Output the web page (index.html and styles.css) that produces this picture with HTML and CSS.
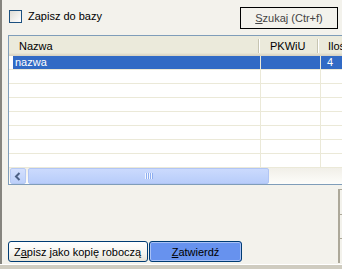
FILE: index.html
```html
<!DOCTYPE html>
<html lang="pl">
<head>
    <meta charset="UTF-8">
    <meta name="viewport" content="width=device-width, initial-scale=1.0">
    <title>Dokument</title>
    <link rel="stylesheet" href="styles.css">
</head>
<body>
<div class="window">
    <div class="main">
        <div class="toolbar">
            <label class="check-label"><span class="check"></span>Zapisz do bazy</label>
            <button class="search-btn"><u>S</u>zukaj (Ctr+f)</button>
        </div>

        <div class="grid">
            <div class="grid-head">
                <span class="h-cell h-name">Nazwa</span>
                <span class="sep"></span>
                <span class="h-cell h-pkwiu">PKWiU</span>
                <span class="sep"></span>
                <span class="h-cell h-qty">Ilość</span>
            </div>
            <div class="grid-body">
                <div class="row selected"><span class="cell c-name">nazwa</span><span class="cell c-pkwiu"></span><span class="cell c-qty">4</span></div>
                <div class="row"><span class="cell c-name"></span><span class="cell c-pkwiu"></span><span class="cell c-qty"></span></div>
                <div class="row"><span class="cell c-name"></span><span class="cell c-pkwiu"></span><span class="cell c-qty"></span></div>
                <div class="row"><span class="cell c-name"></span><span class="cell c-pkwiu"></span><span class="cell c-qty"></span></div>
                <div class="row"><span class="cell c-name"></span><span class="cell c-pkwiu"></span><span class="cell c-qty"></span></div>
                <div class="row"><span class="cell c-name"></span><span class="cell c-pkwiu"></span><span class="cell c-qty"></span></div>
                <div class="row"><span class="cell c-name"></span><span class="cell c-pkwiu"></span><span class="cell c-qty"></span></div>
                <div class="row"><span class="cell c-name"></span><span class="cell c-pkwiu"></span><span class="cell c-qty"></span></div>
            </div>
            <div class="hscroll">
                <span class="arrow-btn">
                    <svg width="8" height="9" viewBox="0 0 8 9"><polyline points="5.5,1 2,4.5 5.5,8" fill="none" stroke="#4d6185" stroke-width="2"/></svg>
                </span>
                <span class="thumb"><span class="grip"></span></span>
            </div>
        </div>

        <div class="lower">
            <div class="actions">
                <button class="btn btn-draft">Z<u>a</u>pisz jako kopię roboczą</button>
                <button class="btn btn-ok"><u>Z</u>atwierdź</button>
            </div>
            <div class="side">
                <span class="side-box"></span>
                <span class="side-box"></span>
                <span class="side-box"></span>
            </div>
        </div>
    </div>
    <div class="status"></div>
</div>
</body>
</html>
```

FILE: styles.css
```css
* {
    box-sizing: border-box;
}
body {
    margin: 0;
    background: #f3f2ec;
    font-family: "Liberation Sans", Arial, sans-serif;
    font-size: 11px;
    color: #000;
}
.window {
    width: 342px;
    height: 269px;
    overflow: hidden;
    display: flex;
    flex-direction: column;
}
.main {
    height: 264px;
    border-left: 2px solid #86857f;
    display: flex;
    flex-direction: column;
}
.status {
    flex: 1;
    border-top: 1px solid #fff;
    background: #cfccc0;
}

/* top bar */
.toolbar {
    height: 35px;
    display: flex;
    justify-content: space-between;
    align-items: flex-start;
    padding: 7px 4px 0 7px;
}
.check-label {
    display: flex;
    align-items: center;
    gap: 6px;
    margin-top: 3px;
    line-height: 13px;
}
.check {
    width: 13px;
    height: 13px;
    border: 1px solid #1c5180;
    background: linear-gradient(135deg, #dedcd5, #fff);
}
.search-btn {
    width: 98px;
    height: 22px;
    border: 1px solid #000;
    background: transparent;
    font: inherit;
    color: #444;
    padding: 0;
}

/* list */
.grid {
    margin-left: 6px;
    height: 150px;
    border: 1px solid #7f9db9;
    border-right: none;
    background: #fff;
    display: flex;
    flex-direction: column;
    overflow: hidden;
}
.grid-head {
    height: 20px;
    flex: none;
    display: flex;
    align-items: center;
    background: linear-gradient(#ebeadb, #ebeadb 85%, #e2decd 90%, #d6d2c2 100%);
    white-space: nowrap;
}
.h-cell {
    flex: none;
    line-height: 13px;
}
.h-name {
    width: 249px;
    padding-left: 10px;
}
.h-pkwiu {
    width: 57px;
    padding-left: 10px;
}
.h-qty {
    padding-left: 9px;
}
.sep {
    flex: none;
    width: 2px;
    height: 14px;
    border-left: 1px solid #c7c5b2;
    border-right: 1px solid #fff;
}
.grid-body {
    height: 112px;
    flex: none;
    overflow: hidden;
}
.row {
    height: 14px;
    display: flex;
    border-bottom: 1px solid #ebe9d8;
}
.row.selected {
    background: linear-gradient(to right, #fff 4px, #316ac5 4px);
    color: #fff;
}
.cell {
    flex: none;
    line-height: 13px;
    padding-left: 6px;
    white-space: nowrap;
}
.c-name {
    width: 252px;
    border-right: 1px solid #ebe9d8;
}
.c-pkwiu {
    width: 60px;
    border-right: 1px solid #ebe9d8;
}
.c-qty {
    flex: 1;
}

/* horizontal scrollbar */
.hscroll {
    height: 16px;
    flex: none;
    display: flex;
    align-items: stretch;
    padding-left: 1px;
    background: linear-gradient(#f1efe8, #fdfdfa);
}
.arrow-btn {
    width: 16px;
    display: flex;
    align-items: center;
    justify-content: center;
    border: 1px solid #b6c9f3;
    border-radius: 2px;
    background: linear-gradient(#d4e0fd, #bcd0fa);
}
.thumb {
    width: 241px;
    margin-left: 2px;
    display: flex;
    align-items: center;
    justify-content: center;
    border: 1px solid #b1c5f4;
    border-radius: 2px;
    background: linear-gradient(#cbdafd, #b8cdfa);
}
.grip {
    width: 8px;
    height: 6px;
    background: repeating-linear-gradient(to right, #f1f5fe 0 1px, #8eaef0 1px 2px);
}

/* lower part */
.lower {
    flex: 1;
    display: flex;
}
.actions {
    flex: 1;
    display: flex;
    align-items: flex-end;
    gap: 1px;
    padding: 0 0 2px 6px;
}
.btn {
    height: 21px;
    border: 1px solid #003c74;
    border-radius: 3px;
    font: inherit;
    color: #000;
    padding: 0 4px;
    white-space: nowrap;
}
.btn-draft {
    width: 140px;
    text-align: left;
    padding-left: 5px;
    background: linear-gradient(#fff, #f4f3ee 60%, #e4e1d5);
}
.btn-ok {
    width: 93px;
    background: #6792ee;
    box-shadow: inset 0 0 0 1px #a9c1f5;
}
.side {
    width: 4px;
    display: flex;
    flex-direction: column;
    padding: 4px 0 1px;
}
.side-box {
    flex: 1;
    border-left: 2px solid #aca899;
    border-top: 1px solid #aca899;
}
```
